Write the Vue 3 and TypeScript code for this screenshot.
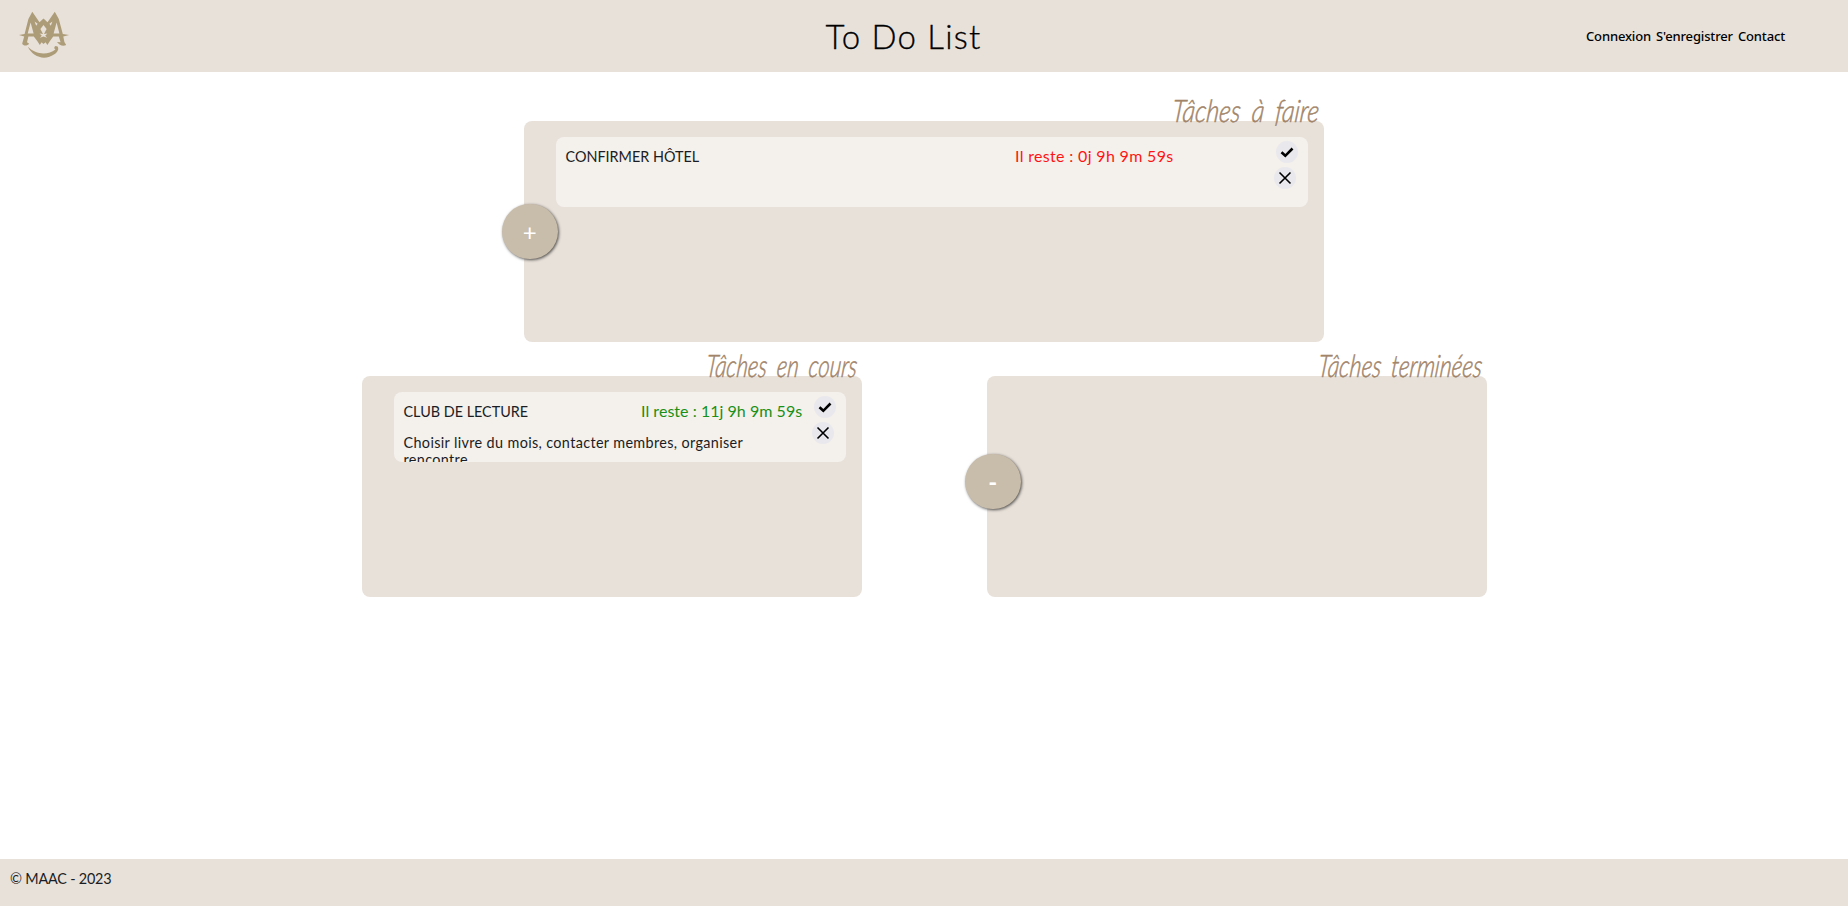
<script setup lang="ts">
interface Task { title: string; remaining: string; urgent: boolean; description: string }
interface Panel { id: string; title: string; width: number; tasks: Task[]; action?: string }

const panels: Panel[] = [
  {
    id: 'todo', title: 'Tâches à faire', width: 147, action: '+',
    tasks: [{ title: 'CONFIRMER HÔTEL', remaining: 'Il reste : 0j 9h 9m 59s', urgent: true, description: '' }],
  },
  {
    id: 'doing', title: 'Tâches en cours', width: 151,
    tasks: [{
      title: 'CLUB DE LECTURE', remaining: 'Il reste : 11j 9h 9m 59s', urgent: false,
      description: 'Choisir livre du mois, contacter membres, organiser rencontre',
    }],
  },
  { id: 'done', title: 'Tâches terminées', width: 164, action: '-', tasks: [] },
]
const links = ['Connexion', "S'enregistrer", 'Contact']
</script>

<template>
  <div class="page">
    <header class="header">
      <svg class="logo" viewBox="0 0 58 54" aria-label="MAAC">
        <g fill="#ad9c78">
          <path fill-rule="evenodd" d="M17.3 3.8 L24.5 14.2 L28.5 10.4 L32.5 14.2 L39.8 3.8 L43.8 11 L47.8 26 L54 27 L48.3 28.6 L49.4 34 L51.2 37 C48 38.4 44.5 37.6 42 34 L45.6 34.3 L43.8 28.6 L38.2 28.6 L34.6 33.5 L32.4 37 L30.6 34.2 L28.5 36 L26.6 34.2 L24.8 37 L22.6 33.5 L18.8 28.6 L13.4 28.6 L12 34.2 L14.2 35.8 C12 38.4 8 38 7.2 35.5 L9.2 28.6 L4 27 L9.6 26 L13.4 11 Z M15.6 14.5 L12.7 25.6 L18.6 25.6 Z M41.6 14.5 L38.6 25.6 L44.4 25.6 Z M28.5 17 L25.4 21 L28 26 L24.6 25.6 L26.8 27.8 L24.8 29.8 L28.5 28.6 L32.2 29.8 L30.2 27.8 L32.4 25.6 L29 26 L31.6 21 Z M19.6 13.6 L21.2 17.8 L22.6 15.8 Z M37.4 13.6 L35.8 17.8 L34.4 15.8 Z" />
          <path d="M12.8 38.8 C21 47 33 47.2 40.4 41.5 C38.8 41 39 38.8 40.5 38 L42.6 38.4 C44.2 40.8 42.8 43.8 39.8 46 C30 53 18 49.5 12.8 38.8 Z" />
        </g>
      </svg>
      <h1 class="site-title">To Do List</h1>
      <nav class="nav"><a v-for="link in links" :key="link">{{ link }}</a></nav>
    </header>
    <main class="board">
      <section v-for="panel in panels" :key="panel.id" class="panel" :class="panel.id">
        <h2 class="panel-title">
          <svg :width="panel.width + 12" height="48">
            <text x="3" y="35.5" transform="translate(7 0) skewX(-6)" :textLength="panel.width" lengthAdjust="spacingAndGlyphs">{{ panel.title }}</text>
          </svg>
        </h2>
        <article v-for="task in panel.tasks" :key="task.title" class="task">
          <h3 class="task-title">{{ task.title }}</h3>
          <p class="remaining" :class="{ urgent: task.urgent }">{{ task.remaining }}</p>
          <p class="description">{{ task.description }}</p>
          <div class="controls">
            <button class="control check" aria-label="Valider"><svg viewBox="0 0 22 22"><path d="M5.5 11.2 L9.3 14.8 L16.5 7.5" stroke-width="2.6" /></svg></button>
            <button class="control" aria-label="Supprimer"><svg viewBox="0 0 22 22"><path d="M5.5 5.5 L16.5 16.5 M16.5 5.5 L5.5 16.5" stroke-width="1.6" /></svg></button>
          </div>
        </article>
        <button v-if="panel.action" class="action">{{ panel.action }}</button>
      </section>
    </main>
    <footer class="footer">© MAAC - 2023</footer>
  </div>
</template>

<style>
body { margin: 0; background: #fff; }
</style>

<style scoped>
.page { height: 906px; display: flex; flex-direction: column; overflow: hidden; font-family: Lato, "Liberation Sans", sans-serif; color: #1b1d24; }
h1, h2, h3, p { margin: 0; font-weight: 400; }
button { padding: 0; border: 0; font-family: inherit; }
.header { height: 72px; flex: none; display: grid; grid-template-columns: 825.5px 760.5px 1fr; align-items: center; background: #e8e1da; }
.logo { width: 58px; height: 54px; margin: 0 0 2px 15px; }
.site-title { font-size: 33px; font-weight: 300; line-height: 40px; letter-spacing: 1.2px; margin-top: -1px; color: #000; -webkit-text-stroke: .3px #000; }
.nav { display: flex; gap: 5px; font: 500 13px/20px "Noto Sans", sans-serif; letter-spacing: -.15px; color: #000; }
.board { flex: 1; display: grid; grid-template-columns: 500px 500px; grid-template-rows: 221px 221px; column-gap: 125px; row-gap: 34px; align-content: start; padding: 49px 0 0 362px; }
.panel { position: relative; box-sizing: border-box; padding: 16px 16px 0 32px; border-radius: 8px; background: #e8e1da; }
.todo { grid-column: 1 / -1; width: 800px; margin-left: 162px; }
.panel-title { position: absolute; top: -34px; right: 0; height: 48px; }
.panel-title svg { display: block; overflow: visible; }
.panel-title text { font: italic 300 31px Lato, sans-serif; word-spacing: 6px; fill: #a28469; stroke: #a28469; stroke-width: .5px; }
.task { height: 70px; overflow: hidden; display: grid; grid-template-columns: 1fr 161px 44px; grid-template-rows: 35px 35px; padding-left: 9.5px; border-radius: 8px; background: #f4f0eb; }
.todo .task { grid-template-columns: 1fr 158px 135px; }
.task-title { font-size: 14.4px; line-height: 39px; white-space: nowrap; }
.remaining { font-size: 16px; line-height: 37px; letter-spacing: .04px; white-space: nowrap; color: #189018; }
.urgent { letter-spacing: .33px; color: #ff1414; }
.description { grid-row: 2; grid-column: 1 / 3; font-size: 14.4px; line-height: 17px; letter-spacing: .36px; padding-top: 7px; }
.controls { grid-column: 3; grid-row: 1 / 3; display: flex; flex-direction: column; gap: 4px; align-items: flex-end; padding: 4px 10px 0 0; }
.control { width: 22px; height: 22px; border-radius: 50%; background: #e9e8ed; }
.control:not(.check) { margin-right: 2px; }
.control svg { display: block; fill: none; stroke: #000; }
.action { position: absolute; left: -22px; top: 82.5px; width: 55.5px; height: 55.5px; border-radius: 50%; background: #c8bcaa; color: #fff; font-size: 24px; box-shadow: 1px 1px 3px rgba(0, 0, 0, .65); }
.done .action { top: 77.5px; font-weight: 700; }
.footer { height: 47px; box-sizing: border-box; padding: 10px; font-size: 14.4px; line-height: 19px; letter-spacing: -.2px; background: #e8e1da; }
</style>
